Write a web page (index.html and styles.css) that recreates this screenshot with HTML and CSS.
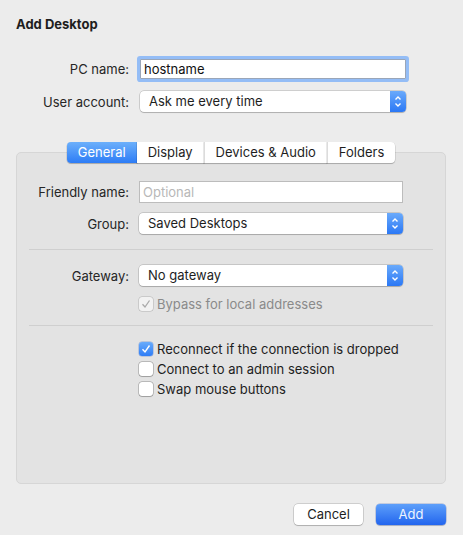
FILE: index.html
```html
<!DOCTYPE html>
<html>
<head>
<meta charset="utf-8">
<link rel="stylesheet" href="styles.css">
</head>
<body>
<div class="window">
  <h1 class="title">Add Desktop</h1>

  <div class="top-form">
    <div class="row">
      <span class="lbl">PC name:</span>
      <div class="input focused">hostname</div>
    </div>
    <div class="row row-popup">
      <span class="lbl">User account:</span>
      <div class="popup">
        <span class="popup-text">Ask me every time</span>
        <span class="stepper"><svg width="16" height="21" viewBox="0 0 16 21"><path d="M5.5 8.5 L8 6 L10.5 8.5 M5.5 12.5 L8 15 L10.5 12.5" fill="none" stroke="#fff" stroke-width="1.4"/></svg></span>
      </div>
    </div>
  </div>

  <div class="tabbox">
    <div class="tabs">
      <span class="tab active">General</span>
      <span class="tab">Display</span>
      <span class="tab">Devices &amp; Audio</span>
      <span class="tab">Folders</span>
    </div>

    <div class="panel">
      <div class="prow">
        <span class="plbl">Friendly name:</span>
        <div class="textfield placeholder">Optional</div>
      </div>
      <div class="prow prow-group">
        <span class="plbl">Group:</span>
        <div class="popup wide">
          <span class="popup-text">Saved Desktops</span>
          <span class="stepper"><svg width="16" height="21" viewBox="0 0 16 21"><path d="M5.5 8.5 L8 6 L10.5 8.5 M5.5 12.5 L8 15 L10.5 12.5" fill="none" stroke="#fff" stroke-width="1.4"/></svg></span>
        </div>
      </div>

      <div class="sep sep-1"></div>

      <div class="prow">
        <span class="plbl">Gateway:</span>
        <div class="popup wide">
          <span class="popup-text">No gateway</span>
          <span class="stepper"><svg width="16" height="21" viewBox="0 0 16 21"><path d="M5.5 8.5 L8 6 L10.5 8.5 M5.5 12.5 L8 15 L10.5 12.5" fill="none" stroke="#fff" stroke-width="1.4"/></svg></span>
        </div>
      </div>
      <div class="check-row bypass disabled">
        <span class="box box-disabled"><svg width="14" height="14" viewBox="0 0 14 14"><path d="M3.5 7.3 L6 10 L10.5 3.5" fill="none" stroke="#a9a9a9" stroke-width="1.3"/></svg></span>
        <span class="ctext">Bypass for local addresses</span>
      </div>

      <div class="sep sep-2"></div>

      <div class="checks">
        <div class="check-row">
          <span class="box box-on"><svg width="14" height="14" viewBox="0 0 14 14"><path d="M3.5 7.3 L6 10 L10.5 3.5" fill="none" stroke="#fff" stroke-width="1.4"/></svg></span>
          <span class="ctext">Reconnect if the connection is dropped</span>
        </div>
        <div class="check-row">
          <span class="box"></span>
          <span class="ctext">Connect to an admin session</span>
        </div>
        <div class="check-row">
          <span class="box"></span>
          <span class="ctext">Swap mouse buttons</span>
        </div>
      </div>
    </div>
  </div>

  <div class="buttons">
    <button class="btn cancel">Cancel</button>
    <button class="btn primary">Add</button>
  </div>
</div>
</body>
</html>
```

FILE: styles.css
```css
html, body {
  margin: 0;
  padding: 0;
}
body {
  background: #ececec;
  font-family: Inter, "Liberation Sans", sans-serif;
  font-size: 13px;
  color: #262626;
  width: 463px;
  height: 535px;
  overflow: hidden;
}
.window {
  display: flex;
  flex-direction: column;
}
.title {
  margin: 0;
  padding: 16px 0 0 16px;
  font-size: 13px;
  font-weight: 700;
  line-height: 16px;
  color: #1e1e1e;
}
.top-form {
  margin-top: 27px;
  padding-left: 16px;
  display: flex;
  flex-direction: column;
}
.row {
  display: flex;
  align-items: center;
}
.row-popup {
  margin-top: 12px;
}
.lbl {
  width: 113px;
  text-align: right;
  margin-right: 11px;
  line-height: 16px;
}
.input {
  box-sizing: border-box;
  width: 266px;
  height: 20px;
  background: #fff;
  border: 1px solid #9aa6b8;
  padding-left: 3px;
  line-height: 18px;
  color: #111;
}
.input.focused {
  box-shadow: 0 0 0 3px #94bdf6;
  border-radius: 1px;
}
.popup {
  box-sizing: border-box;
  width: 266px;
  height: 21px;
  background: #fff;
  border-radius: 4px;
  box-shadow: 0 0 0 0.5px rgba(0, 0, 0, 0.25), 0 1px 1px rgba(0, 0, 0, 0.15);
  display: flex;
  align-items: center;
  overflow: hidden;
}
.popup.wide {
  width: 264px;
}
.popup-text {
  flex: 1;
  padding-left: 9px;
  line-height: 21px;
  color: #1e1e1e;
}
.stepper {
  width: 16px;
  height: 21px;
  display: block;
  background: linear-gradient(#6aaafb, #2b78f5);
}
.stepper svg {
  display: block;
}

.tabbox {
  box-sizing: border-box;
  margin: 40px 0 0 16px;
  width: 430px;
  height: 332px;
  background: #e3e3e3;
  border: 1px solid #d6d6d6;
  border-radius: 5px;
}
.tabs {
  display: flex;
  justify-content: center;
  margin-top: -11px;
}
.tab {
  box-sizing: border-box;
  height: 21px;
  line-height: 21px;
  padding: 0 11px;
  background: #fff;
  color: #1e1e1e;
  border-left: 1px solid #dcdcdc;
  box-shadow: 0 0.5px 0 0.5px rgba(0, 0, 0, 0.15), 0 1px 1px rgba(0, 0, 0, 0.12);
}
.tab:first-child {
  border-left: none;
  border-radius: 4px 0 0 4px;
}
.tab:last-child {
  border-radius: 0 4px 4px 0;
}
.tab.active {
  background: linear-gradient(#6cb0fb, #2d7cf6);
  color: #fff;
}
.tab.active + .tab {
  border-left: none;
}
.panel {
  padding-top: 18px;
  display: flex;
  flex-direction: column;
}
.prow {
  display: flex;
  align-items: center;
}
.prow-group {
  margin-top: 10px;
}
.plbl {
  width: 112px;
  text-align: right;
  margin-right: 10px;
  line-height: 16px;
}
.textfield {
  box-sizing: border-box;
  width: 264px;
  height: 22px;
  background: #fff;
  border: 1px solid #bcbcbc;
  padding-left: 3px;
  line-height: 20px;
}
.placeholder {
  color: #b8b8b8;
}
.sep {
  height: 1px;
  background: #cfcfcf;
  margin: 0 12px;
}
.sep-1 {
  margin-top: 15px;
  margin-bottom: 15px;
}
.sep-2 {
  margin-top: 11px;
  margin-bottom: 13px;
}
.check-row {
  display: flex;
  align-items: center;
  padding-left: 122px;
  height: 20px;
}
.bypass {
  margin-top: 8px;
}
.checks {
  display: flex;
  flex-direction: column;
}
.box {
  box-sizing: border-box;
  width: 14px;
  height: 14px;
  border-radius: 3px;
  background: #fff;
  box-shadow: 0 0 0 0.5px rgba(0, 0, 0, 0.35), 0 0.5px 1px rgba(0, 0, 0, 0.15);
  margin-right: 4px;
  flex: none;
}
.box svg {
  display: block;
}
.box-on {
  background: linear-gradient(#68abfb, #2f7df6);
  box-shadow: 0 0 0 0.5px rgba(0, 60, 180, 0.35);
}
.box-disabled {
  background: #f2f2f2;
  box-shadow: 0 0 0 0.5px rgba(0, 0, 0, 0.22);
}
.ctext {
  line-height: 16px;
  color: #1e1e1e;
}
.disabled .ctext {
  color: #8a8a8a;
}

.buttons {
  display: flex;
  justify-content: flex-end;
  gap: 13px;
  margin-top: 20px;
  padding-right: 17px;
}
.btn {
  box-sizing: border-box;
  width: 70px;
  height: 21px;
  border: none;
  border-radius: 4px;
  background: #fff;
  font-family: inherit;
  font-size: 13px;
  color: #1e1e1e;
  line-height: 21px;
  padding: 0;
  box-shadow: 0 0 0 0.5px rgba(0, 0, 0, 0.25), 0 1px 1px rgba(0, 0, 0, 0.15);
}
.btn.cancel {
  width: 69px;
}
.btn.primary {
  background: linear-gradient(#5d9ffa, #2265ee);
  color: #eef4ff;
  box-shadow: 0 0 0 0.5px rgba(0, 50, 160, 0.35), 0 1px 1px rgba(0, 0, 0, 0.15);
}
```
